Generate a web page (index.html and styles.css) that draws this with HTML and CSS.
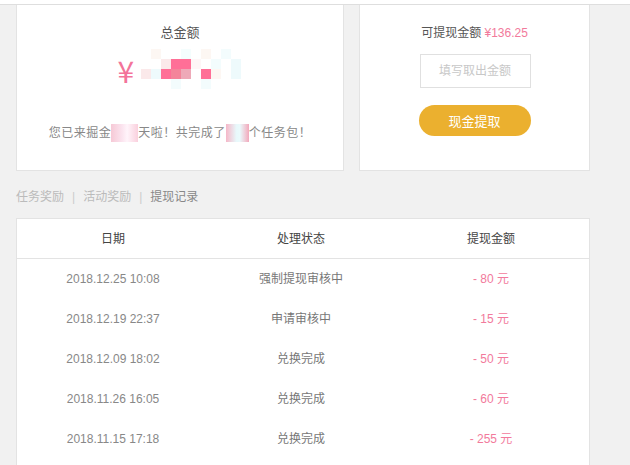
FILE: index.html
```html
<!DOCTYPE html>
<html lang="zh-CN">
<head>
<meta charset="utf-8">
<title>提现记录</title>
<link rel="stylesheet" href="styles.css">
</head>
<body>
<div class="topbar"></div>
<div class="page">
  <div class="cards">
    <div class="card total">
      <div class="label">总金额</div>
      <div class="amount">
        <span class="yen">¥</span>
        <span class="mosaic">
          <i class="c0"></i><i class="c1"></i><i class="c0"></i><i class="c0"></i><i class="c2"></i><i class="c0"></i><i class="c1"></i><i class="c0"></i><i class="c3"></i><i class="c0"></i><i class="c0"></i>
          <i class="c0"></i><i class="c0"></i><i class="c5"></i><i class="p"></i><i class="p"></i><i class="c4"></i><i class="c0"></i><i class="c3"></i><i class="c0"></i><i class="c6"></i><i class="c0"></i>
          <i class="c5"></i><i class="c6"></i><i class="p"></i><i class="p2"></i><i class="p3"></i><i class="c0"></i><i class="p"></i><i class="c1"></i><i class="c0"></i><i class="c6"></i><i class="c0"></i>
          <i class="c0"></i><i class="c0"></i><i class="c0"></i><i class="c3"></i><i class="c0"></i><i class="c0"></i><i class="c3"></i><i class="c0"></i><i class="c0"></i><i class="c0"></i><i class="c0"></i>
        </span>
      </div>
      <div class="sentence">您已来掘金<span class="blur w27"></span>天啦！共完成了<span class="blur w23"></span>个任务包！</div>
    </div>
    <div class="card withdraw">
      <div class="avail">可提现金额 <span class="pink">¥136.25</span></div>
      <input class="input" type="text" placeholder="填写取出金额">
      <button class="btn" type="button">现金提取</button>
    </div>
  </div>

  <div class="tabs">
    <span class="tab">任务奖励</span><span class="sep">|</span><span class="tab">活动奖励</span><span class="sep">|</span><span class="tab active">提现记录</span>
  </div>

  <div class="table">
    <div class="row head">
      <div>日期</div><div>处理状态</div><div>提现金额</div>
    </div>
    <div class="row">
      <div class="date">2018.12.25 10:08</div><div class="status">强制提现审核中</div><div class="money">- 80 元</div>
    </div>
    <div class="row">
      <div class="date">2018.12.19 22:37</div><div class="status">申请审核中</div><div class="money">- 15 元</div>
    </div>
    <div class="row">
      <div class="date">2018.12.09 18:02</div><div class="status">兑换完成</div><div class="money">- 50 元</div>
    </div>
    <div class="row">
      <div class="date">2018.11.26 16:05</div><div class="status">兑换完成</div><div class="money">- 60 元</div>
    </div>
    <div class="row">
      <div class="date">2018.11.15 17:18</div><div class="status">兑换完成</div><div class="money">- 255 元</div>
    </div>
  </div>
</div>
</body>
</html>
```
FILE: styles.css
```css
* { box-sizing: border-box; }
html, body { margin: 0; padding: 0; }
body {
  background: #f1f1f1;
  font-family: "Liberation Sans", "Noto Sans CJK SC", sans-serif;
  font-size: 12px;
  color: #666;
  height: 465px;
  overflow: hidden;
}
.topbar {
  height: 5px;
  background: #fff;
  border-bottom: 1px solid #dedede;
}
.page {
  padding: 0 0 0 16px;
  width: 590px;
}
.cards {
  display: flex;
  gap: 15px;
}
.card {
  background: #fff;
  border: 1px solid #e3e3e3;
  border-top: none;
  height: 166px;
  display: flex;
  flex-direction: column;
  align-items: center;
}
.total { width: 328px; }
.withdraw { width: 231px; }
.label {
  margin-top: 19px;
  font-size: 13px;
  line-height: 18px;
  color: #555;
}
.amount {
  display: flex;
  align-items: flex-start;
  margin-top: 7px;
  margin-left: 8px;
  height: 40px;
}
.yen {
  font-size: 30px;
  line-height: 30px;
  color: #f3739a;
  margin-top: 6px;
  width: 23px;
  font-family: "Noto Sans CJK SC", sans-serif;
}
.mosaic {
  display: grid;
  grid-template-columns: repeat(11, 10px);
  grid-auto-rows: 10px;
}
.mosaic i { display: block; }
.c0 { background: #fff; }
.c1 { background: #fdf7f3; }
.c2 { background: #f4fdfd; }
.c3 { background: #f3fcfd; }
.c4 { background: #fef6f7; }
.c5 { background: #fbe9ea; }
.c6 { background: #eefafc; }
.p { background: #ff6f97; }
.p2 { background: #f4849a; }
.p3 { background: #eea9b8; }
.sentence {
  margin-top: 35px;
  line-height: 18px;
  color: #888;
  display: flex;
  align-items: center;
  letter-spacing: 0.5px;
}
.blur {
  display: inline-block;
  height: 18px;
  background: linear-gradient(90deg, #f6c9d6 0%, #fbe3ee 40%, #fff4fa 60%, #fad0dd 100%);
}
.w27 { width: 27px; }
.w23 { width: 23px; background: linear-gradient(90deg, #f5b7c8 0%, #e8f8fb 45%, #eafafc 60%, #f3a8bb 100%); }
.avail {
  margin-top: 19px;
  font-size: 12px;
  line-height: 18px;
  color: #555;
}
.pink { color: #f27a9c; }
.input {
  margin-top: 12px;
  width: 111px;
  height: 34px;
  border: 1px solid #e0e0e0;
  outline: none;
  text-align: center;
  font-family: inherit;
  font-size: 12px;
  color: #666;
  padding: 0;
  margin-left: 1px;
}
.input::placeholder { color: #c8c8c8; }
.btn {
  margin-top: 17px;
  width: 112px;
  height: 31px;
  border: none;
  border-radius: 16px;
  background: #ebb02f;
  color: #fff;
  font-family: inherit;
  font-size: 13px;
  padding: 0;
}
.tabs {
  margin-top: 17px;
  height: 18px;
  line-height: 18px;
  display: flex;
  gap: 8px;
  color: #bbb;
}
.sep { color: #ccc; }
.tab.active { color: #888; }
.table {
  margin-top: 12px;
  width: 574px;
  background: #fff;
  border: 1px solid #e3e3e3;
  border-bottom: none;
  height: 247px;
  overflow: hidden;
}
.row {
  display: grid;
  grid-template-columns: 192px 184px 1fr;
  height: 40px;
  align-items: center;
  text-align: center;
  line-height: 18px;
}
.row.head {
  border-bottom: 1px solid #e3e3e3;
  color: #444;
  font-size: 12px;
}
.date { color: #888; }
.status { color: #777; }
.money { color: #f27a9c; }
```
